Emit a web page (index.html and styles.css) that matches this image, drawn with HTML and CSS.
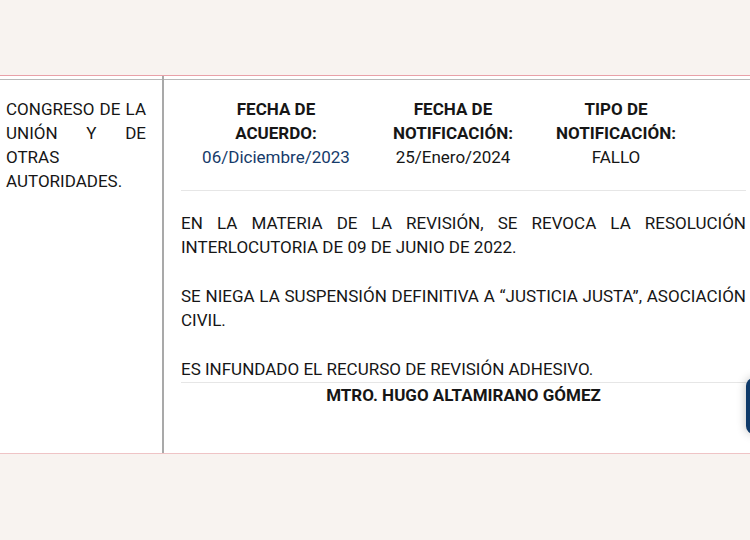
FILE: index.html
```html
<!DOCTYPE html>
<html lang="es">
<head>
<meta charset="utf-8">
<title>Notificación</title>
<link rel="stylesheet" href="styles.css">
</head>
<body>
<div class="page">
  <div class="top"></div>
  <div class="sheet">
    <div class="row">
      <div class="left">CONGRESO DE LA UNIÓN Y DE OTRAS AUTORIDADES.</div>
      <div class="right">
        <div class="heads">
          <div class="head">
            <div class="label">FECHA DE<br>ACUERDO:</div>
            <div class="value blue">06/Diciembre/2023</div>
          </div>
          <div class="head">
            <div class="label">FECHA DE<br>NOTIFICACIÓN:</div>
            <div class="value">25/Enero/2024</div>
          </div>
          <div class="head">
            <div class="label">TIPO DE<br>NOTIFICACIÓN:</div>
            <div class="value">FALLO</div>
          </div>
        </div>
        <div class="sep"></div>
        <p class="para">EN LA MATERIA DE LA REVISIÓN, SE REVOCA LA RESOLUCIÓN INTERLOCUTORIA DE 09 DE JUNIO DE 2022.</p>
        <p class="para">SE NIEGA LA SUSPENSIÓN DEFINITIVA A “JUSTICIA JUSTA”, ASOCIACIÓN CIVIL.</p>
        <p class="para">ES INFUNDADO EL RECURSO DE REVISIÓN ADHESIVO.</p>
        <div class="sign">MTRO. HUGO ALTAMIRANO GÓMEZ</div>
      </div>
    </div>
  </div>
  <div class="fab"></div>
</div>
</body>
</html>
```

FILE: styles.css
```css
* { box-sizing: border-box; }
html, body { margin: 0; padding: 0; }
body {
  background: #f8f3f0;
  font-family: Roboto, "Noto Sans", sans-serif;
  color: #161616;
  font-size: 17px;
  line-height: 24px;
}
.page {
  position: relative;
  width: 750px;
  height: 540px;
  overflow: hidden;
}
.top { height: 75px; }
.sheet {
  background: #fff;
  border-top: 1px solid #e9a1a9;
  border-bottom: 1px solid #efc4c6;
}
.row {
  display: grid;
  grid-template-columns: 162px 1fr;
  height: 377px;
  background: linear-gradient(#b9b9b9, #b9b9b9) 0 3px / 100% 1px no-repeat, #fff;
}
.left {
  padding: 21px 16px 0 6px;
  text-align: justify;
}
.right {
  border-left: 2px solid #a9a9a9;
  padding: 21px 4px 0 17px;
}
.heads {
  display: grid;
  grid-template-columns: 190px 164px 162px;
}
.head { text-align: center; }
.label { font-weight: 700; }
.blue { color: #163b6a; }
.sep {
  height: 1px;
  background: #e6e6e6;
  margin: 21px 0 20px;
}
.para {
  margin: 0 0 25px;
  text-align: justify;
}
.para:last-of-type { margin-bottom: 0; }
.sign {
  margin-top: 1px;
  border-top: 1px solid #e6e6e6;
  text-align: center;
  font-weight: 700;
}
.fab {
  position: absolute;
  left: 746px;
  top: 378px;
  width: 24px;
  height: 56px;
  border-radius: 8px;
  background: #0f3a6a;
  box-shadow: 0 0 10px rgba(0, 0, 0, 0.25);
}
```
